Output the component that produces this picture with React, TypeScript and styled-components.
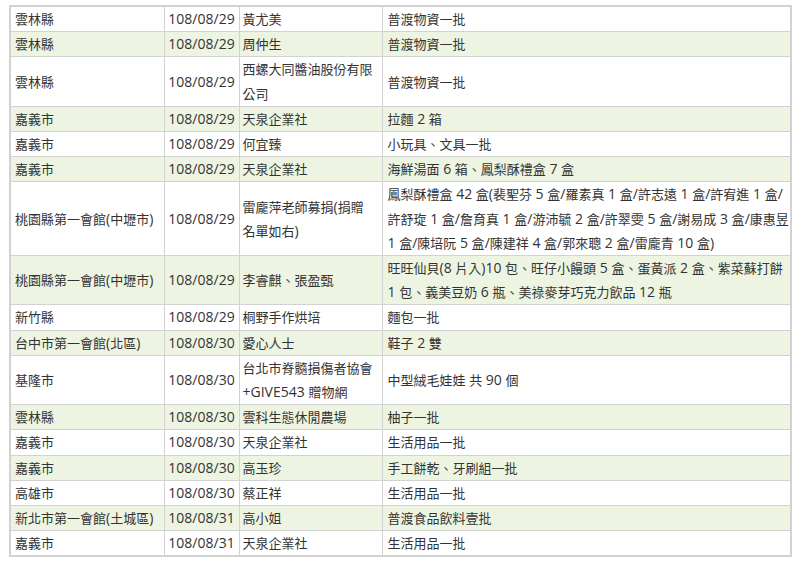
import styled, { createGlobalStyle, css } from 'styled-components';

const GlobalStyle = createGlobalStyle`
  body {
    margin: 0;
    background: #ffffff;
    font-family: "Open Sans", "Noto Sans CJK TC", sans-serif;
  }
`;

const Page = styled.div`
  padding: 5px 8px 0 9px;
`;

const Table = styled.table`
  width: 783px;
  border-collapse: collapse;
  table-layout: fixed;
  border: 2px solid #d2d2d2;
  font-size: 13px;
  color: #333333;
`;

const Row = styled.tr`
  background: #ffffff;

  &:nth-child(even) {
    background: #edf5e2;
  }
`;

type Kind = 'place' | 'date' | 'donor' | 'items';

const Cell = styled.td<{ $kind: Kind }>`
  border: 1px solid #d2d2d2;
  padding: 0 3px 0 4px;
  line-height: 24.2px;
  vertical-align: middle;
  text-align: left;

  ${(p) =>
    p.$kind === 'date' &&
    css`
      padding: 0;
      text-align: center;
      white-space: nowrap;
    `}

  ${(p) =>
    p.$kind === 'donor' &&
    css`
      padding: 0 7px 0 3px;
    `}

  ${(p) =>
    p.$kind === 'items' &&
    css`
      padding: 0 0 0 5px;
    `}
`;

// latin runs render a touch larger than the CJK text in the source page
const Latin = styled.span`
  font-size: 14px;
`;

function Text({ children }: { children: string }) {
  const parts = children.split(/([\x20-\x7e]+)/).filter(Boolean);
  return (
    <>
      {parts.map((p, i) => (/^[\x20-\x7e]+$/.test(p) ? <Latin key={i}>{p}</Latin> : p))}
    </>
  );
}

type Donation = {
  place: string;
  date: string;
  donor: string;
  items: string;
};

const donations: Donation[] = [
  { place: '雲林縣', date: '108/08/29', donor: '黃尤美', items: '普渡物資一批' },
  { place: '雲林縣', date: '108/08/29', donor: '周仲生', items: '普渡物資一批' },
  { place: '雲林縣', date: '108/08/29', donor: '西螺大同醬油股份有限公司', items: '普渡物資一批' },
  { place: '嘉義市', date: '108/08/29', donor: '天泉企業社', items: '拉麵 2 箱' },
  { place: '嘉義市', date: '108/08/29', donor: '何宜臻', items: '小玩具、文具一批' },
  { place: '嘉義市', date: '108/08/29', donor: '天泉企業社', items: '海鮮湯面 6 箱、鳳梨酥禮盒 7 盒' },
  {
    place: '桃園縣第一會館(中壢市)',
    date: '108/08/29',
    donor: '雷龐萍老師募捐(捐贈名單如右)',
    items:
      '鳳梨酥禮盒 42 盒(裴聖芬 5 盒/羅素真 1 盒/許志遠 1 盒/許宥進 1 盒/許舒琁 1 盒/詹育真 1 盒/游沛毓 2 盒/許翠雯 5 盒/謝易成 3 盒/康惠昱 1 盒/陳培阮 5 盒/陳建祥 4 盒/郭來聰 2 盒/雷龐青 10 盒)',
  },
  {
    place: '桃園縣第一會館(中壢市)',
    date: '108/08/29',
    donor: '李睿麒、張盈甄',
    items: '旺旺仙貝(8 片入)10 包、旺仔小饅頭 5 盒、蛋黃派 2 盒、紫菜蘇打餅 1 包、義美豆奶 6 瓶、美祿麥芽巧克力飲品 12 瓶',
  },
  { place: '新竹縣', date: '108/08/29', donor: '桐野手作烘培', items: '麵包一批' },
  { place: '台中市第一會館(北區)', date: '108/08/30', donor: '愛心人士', items: '鞋子 2 雙' },
  { place: '基隆市', date: '108/08/30', donor: '台北市脊髓損傷者協會+GIVE543 贈物網', items: '中型絨毛娃娃 共 90 個' },
  { place: '雲林縣', date: '108/08/30', donor: '雲科生態休閒農場', items: '柚子一批' },
  { place: '嘉義市', date: '108/08/30', donor: '天泉企業社', items: '生活用品一批' },
  { place: '嘉義市', date: '108/08/30', donor: '高玉珍', items: '手工餅乾、牙刷組一批' },
  { place: '高雄市', date: '108/08/30', donor: '蔡正祥', items: '生活用品一批' },
  { place: '新北市第一會館(土城區)', date: '108/08/31', donor: '高小姐', items: '普渡食品飲料壹批' },
  { place: '嘉義市', date: '108/08/31', donor: '天泉企業社', items: '生活用品一批' },
];

export default function App() {
  return (
    <>
      <GlobalStyle />
      <Page>
        <Table>
          <colgroup>
            <col style={{ width: 154 }} />
            <col style={{ width: 75 }} />
            <col style={{ width: 143 }} />
            <col />
          </colgroup>
          <tbody>
            {donations.map((d, i) => (
              <Row key={i}>
                <Cell $kind="place">
                  <Text>{d.place}</Text>
                </Cell>
                <Cell $kind="date">
                  <Text>{d.date}</Text>
                </Cell>
                <Cell $kind="donor">
                  <Text>{d.donor}</Text>
                </Cell>
                <Cell $kind="items">
                  <Text>{d.items}</Text>
                </Cell>
              </Row>
            ))}
          </tbody>
        </Table>
      </Page>
    </>
  );
}
